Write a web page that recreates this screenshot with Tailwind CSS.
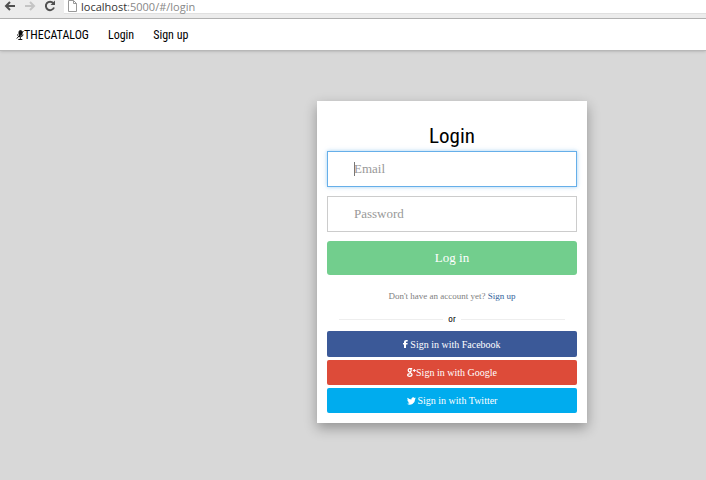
<!DOCTYPE html>
<html lang="en">
<head>
<meta charset="utf-8">
<title>Login</title>
<script src="https://cdn.jsdelivr.net/npm/@tailwindcss/browser@4"></script>
</head>
<body class="min-h-screen bg-[#d8d8d8] text-black font-['Roboto_Condensed','Liberation_Sans',sans-serif]">
<div class="flex h-[19px] items-start border-b border-[#b4b4b4] bg-[#ececec]">
  <div class="flex h-3 items-center gap-2 pl-1 pr-2">
    <button aria-label="Back"><svg class="block h-3 w-3" viewBox="0 0 12 12" fill="none" stroke="#505050" stroke-width="2"><path d="M11 6H2M6 2 2 6l4 4"/></svg></button>
    <button aria-label="Forward"><svg class="block h-3 w-3" viewBox="0 0 12 12" fill="none" stroke="#c4c4c4" stroke-width="2"><path d="M1 6h9M6 2l4 4-4 4"/></svg></button>
    <button aria-label="Reload"><svg class="block h-3 w-3" viewBox="0 0 12 12"><path d="M9.3 3.2A4.2 4.2 0 1 0 10 7.500" fill="none" stroke="#505050" stroke-width="2"/><path d="M11 .5V5H6.500z" fill="#505050"/></svg></button>
  </div>
  <div class="flex h-[14px] flex-1 items-start gap-1 border-b border-[#e0e0e0] bg-white pl-1">
    <svg class="h-3 w-[9px] shrink-0" viewBox="0 0 9 12" fill="#fff" stroke="#999"><path d="M.5.5h5l3 3v8h-8zM5.500.5v3h3"/></svg>
    <p class="font-['Open_Sans',sans-serif] text-[11px] leading-[13px] text-[#888]"><span class="text-[#333]">localhost</span>:5000/#/login</p>
  </div>
</div>
<nav class="flex h-8 items-center gap-[19px] border-b border-[#b8b8b8] bg-white pl-4 text-[12px] shadow-sm">
  <a href="#/" class="flex items-center"><svg class="h-[10px] w-2" viewBox="0 0 8 10" fill="none" stroke="#111"><rect x="3" y=".5" width="3" height="5" rx="1.500" fill="#111"/><path d="M1.500 4.500v.8a3 2.200 0 0 0 5.500 0v-.8M4.300 7v2.500M2.300 9.500h4M.8 8.500 7.500 1"/></svg><span>THECATALOG</span></a>
  <a href="#/login">Login</a>
  <a href="#/signup">Sign up</a>
</nav>
<main class="pt-[50px]">
  <form class="ml-[44.9%] w-[270px] bg-white px-[10px] pt-[21px] pb-[10px] text-center font-['Liberation_Serif',serif] shadow-[0_5px_12px_rgba(0,0,0,0.32)]">
    <h1 class="mb-[1px] font-['Roboto_Condensed','Liberation_Sans',sans-serif] text-[21px] leading-7">Login</h1>
    <div class="relative">
      <input type="email" aria-label="Email" placeholder="Email" autofocus class="block h-9 w-full border border-[#66afe9] pl-[26px] text-[13px] caret-transparent shadow-[0_0_4px_rgba(102,175,233,0.6)] outline-none placeholder:text-[#999]">
      <span class="absolute inset-y-[11px] left-[27px] w-px bg-[#777]"></span>
    </div>
    <input type="password" aria-label="Password" placeholder="Password" class="mt-[9px] block h-9 w-full border border-[#ccc] pl-[26px] text-[13px] outline-none placeholder:text-[#999]">
    <button class="mt-[9px] block h-[34px] w-full rounded-[3px] bg-[#72ce8d] text-[13px] text-white">Log in</button>
    <p class="mt-[14px] text-[9px] leading-[14px] text-[#808080]">Don't have an account yet? <a href="#/signup" class="text-[#33639a]">Sign up</a></p>
    <div class="mx-3 mt-[9px] mb-[5px] flex items-center gap-[5px] font-['Roboto_Condensed','Liberation_Sans',sans-serif] text-[9px] leading-[14px]"><span class="h-px flex-1 bg-[#eee]"></span><span>or</span><span class="h-px flex-1 bg-[#eee]"></span></div>
    <div class="flex flex-col gap-[3px] text-[10px] text-white">
      <button type="button" class="flex h-[26px] items-center justify-center gap-[2px] rounded-[2px] bg-[#3b5998]"><svg class="h-2 w-[5px]" viewBox="0 0 5 8" fill="#fff"><path d="M1 8V4.600H0V3h1V2.200C1 .8 1.800 0 3.300 0H4.700v1.600H3.800c-.6 0-.8.2-.8.7V3h1.700l-.3 1.600H3V8z"/></svg>Sign in with Facebook</button>
      <button type="button" class="flex h-[25px] items-center justify-center rounded-[2px] bg-[#dd4b39]"><svg class="h-[9px] w-[9px]" viewBox="0 0 9 9" fill="none" stroke="#fff"><ellipse cx="2.700" cy="2.300" rx="1.500" ry="1.700" stroke-width="1.300"/><path stroke-width="1.300" d="M2.800.7h2.400M3 4c0 1 2 1 2 2.500S3.800 8.300 2.700 8.300.7 8 .7 7s1-1.400 2.600-1.400"/><path d="M5.800 2.500h3M7.300 1v3"/></svg>Sign in with Google</button>
      <button type="button" class="flex h-[25px] items-center justify-center gap-[2px] rounded-[2px] bg-[#00acee]"><svg class="h-2 w-[9px]" viewBox="0 2 24 20" fill="#fff"><path d="M24 4.600a10 10 0 0 1-2.800.8 5 5 0 0 0 2.100-2.700 10 10 0 0 1-3.100 1.200A4.900 4.900 0 0 0 11.800 8.300 14 14 0 0 1 1.700 3.200a4.900 4.900 0 0 0 1.500 6.500 5 5 0 0 1-2.200-.6c0 2.300 1.600 4.400 3.900 4.900a5 5 0 0 1-2.200.1 4.900 4.900 0 0 0 4.600 3.400A10 10 0 0 1 0 19.500 14 14 0 0 0 21.500 7.100 10 10 0 0 0 24 4.600z"/></svg>Sign in with Twitter</button>
    </div>
  </form>
</main>
</body>
</html>
